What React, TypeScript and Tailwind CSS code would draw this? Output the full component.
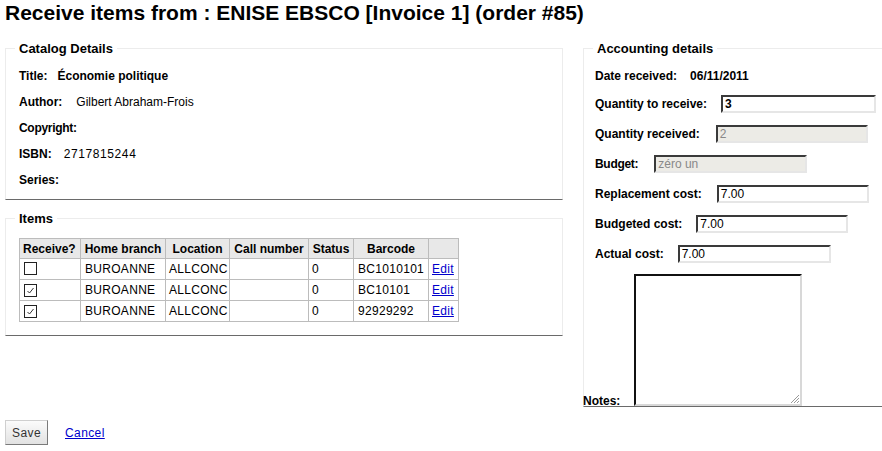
const items = [
  { checked: false, branch: "BUROANNE", location: "ALLCONC", status: "0", barcode: "BC1010101" },
  { checked: true, branch: "BUROANNE", location: "ALLCONC", status: "0", barcode: "BC10101" },
  { checked: true, branch: "BUROANNE", location: "ALLCONC", status: "0", barcode: "92929292" },
];

function Box(props: { checked: boolean }) {
  return (
    <span className="inline-flex h-[13px] w-[13px] items-center justify-center border border-[#222] bg-white">
      {props.checked && (
        <svg width="9" height="9" viewBox="0 0 9 9">
          <path d="M1.5 5 L3.5 7 L7.5 2" fill="none" stroke="#333" strokeWidth="1" />
        </svg>
      )}
    </span>
  );
}

function Field(props: { value: string; width: string; disabled?: boolean; bold?: boolean }) {
  return (
    <div
      className={
        "flex h-[18px] items-center border-2 border-t-[#3a3a3a] border-l-[#3a3a3a] border-r-[#e6e6e6] border-b-[#e6e6e6] pl-[2px] text-[12px] leading-none " +
        props.width +
        (props.disabled ? " bg-[#ecebe6] text-[#888]" : " bg-white text-black")
      }
    >
      <span className={props.bold ? "font-bold" : ""}>{props.value}</span>
    </div>
  );
}

export default function App() {
  return (
    <div className="h-[451px] w-[882px] overflow-hidden bg-white text-[12px] text-black [font-family:'Liberation_Sans',Arial,sans-serif]">
      <h1 className="ml-[5px] pt-[1px] text-[21px] leading-[24px] font-bold">
        Receive items from : ENISE EBSCO [Invoice 1] (order #85)
      </h1>

      <div className="mt-[16px] flex">
        <div className="ml-[5px] w-[558px] shrink-0">
          {/* Catalog details */}
          <fieldset className="border border-[#ececec] border-b-[#6a6a6a] px-[13px] pt-[7px] pb-[6px]">
            <legend className="-ml-[4px] px-[4px] text-[13px] leading-[15px] font-bold">Catalog Details</legend>
            <div className="flex h-[26px] items-center font-bold">
              <span>Title:</span>
              <span className="ml-[10px]">Économie politique</span>
            </div>
            <div className="flex h-[26px] items-center">
              <span className="font-bold">Author:</span>
              <span className="ml-[14px]">Gilbert Abraham-Frois</span>
            </div>
            <div className="flex h-[26px] items-center font-bold tracking-[-0.3px]">Copyright:</div>
            <div className="flex h-[26px] items-center">
              <span className="font-bold">ISBN:</span>
              <span className="ml-[12px] tracking-[0.6px]">2717815244</span>
            </div>
            <div className="flex h-[26px] items-center font-bold">Series:</div>
          </fieldset>

          {/* Items */}
          <fieldset className="mt-[11px] border border-[#ececec] border-b-[#6a6a6a] px-[13px] pt-[12px] pb-[13px]">
            <legend className="-ml-[4px] px-[4px] text-[13px] leading-[15px] font-bold">Items</legend>
            <table className="w-[439px] table-fixed border-collapse text-[12px] whitespace-nowrap">
              <thead>
                <tr className="h-[20px] bg-[#e8e8e8] font-bold">
                  <th className="w-[61px] border border-[#bcbcbc] px-[3px] text-left">Receive?</th>
                  <th className="w-[85px] border border-[#bcbcbc] px-[3px]">Home branch</th>
                  <th className="w-[64px] border border-[#bcbcbc] px-[3px]">Location</th>
                  <th className="w-[79px] border border-[#bcbcbc] px-[3px]">Call number</th>
                  <th className="w-[45px] border border-[#bcbcbc] px-[2px]">Status</th>
                  <th className="w-[75px] border border-[#bcbcbc] px-[3px]">Barcode</th>
                  <th className="w-[30px] border border-[#bcbcbc]"></th>
                </tr>
              </thead>
              <tbody>
                {items.map((it, i) => (
                  <tr key={i} className="h-[21px] tracking-[0.3px]">
                    <td className="border border-[#bcbcbc] px-[4px] align-middle leading-none">
                      <Box checked={it.checked} />
                    </td>
                    <td className="border border-[#bcbcbc] px-[4px]">{it.branch}</td>
                    <td className="border border-[#bcbcbc] px-[3px]">{it.location}</td>
                    <td className="border border-[#bcbcbc] px-[4px]"></td>
                    <td className="border border-[#bcbcbc] px-[3px]">{it.status}</td>
                    <td className="border border-[#bcbcbc] px-[4px]">{it.barcode}</td>
                    <td className="border border-[#bcbcbc] px-[3px]">
                      <a href="#" className="text-[#0000cc] underline">Edit</a>
                    </td>
                  </tr>
                ))}
              </tbody>
            </table>
          </fieldset>
        </div>

        {/* Accounting details */}
        <fieldset className="ml-[20px] w-[320px] shrink-0 border border-[#ececec] border-b-[#6a6a6a] pl-[11px] pt-[6px]">
          <legend className="-ml-[2px] px-[4px] text-[13px] leading-[15px] font-bold">Accounting details</legend>
          <div className="flex h-[27px] items-center font-bold">
            <span>Date received:</span>
            <span className="ml-[13px]">06/11/2011</span>
          </div>
          <div className="flex h-[30px] items-center">
            <span className="mr-[14px] font-bold">Quantity to receive:</span>
            <Field value="3" width="w-[155px]" bold />
          </div>
          <div className="flex h-[30px] items-center">
            <span className="mr-[16px] font-bold">Quantity received:</span>
            <Field value="2" width="w-[152px]" disabled />
          </div>
          <div className="flex h-[30px] items-center">
            <span className="mr-[16px] font-bold tracking-[-0.3px]">Budget:</span>
            <Field value="zéro un" width="w-[153px]" disabled />
          </div>
          <div className="flex h-[30px] items-center">
            <span className="mr-[15px] font-bold">Replacement cost:</span>
            <Field value="7.00" width="w-[152px]" />
          </div>
          <div className="flex h-[30px] items-center">
            <span className="mr-[14px] font-bold">Budgeted cost:</span>
            <Field value="7.00" width="w-[152px]" />
          </div>
          <div className="flex h-[29px] items-center">
            <span className="mr-[14px] font-bold">Actual cost:</span>
            <Field value="7.00" width="w-[153px]" />
          </div>
          <div className="mt-[6px] -ml-[12px] flex items-end">
            <span className="mb-[-2px] w-[51px] font-bold leading-[14px]">Notes:</span>
            <div className="relative h-[132px] w-[168px] border-2 border-t-[#111] border-l-[#111] border-r-[#d8d8d8] border-b-[#d8d8d8] bg-white">
              <svg className="absolute right-0 bottom-0" width="12" height="12" viewBox="0 0 12 12">
                <path d="M11 3 L3 11 M11 6 L6 11 M11 9 L9 11" stroke="#999" strokeWidth="1" />
              </svg>
            </div>
          </div>
        </fieldset>
      </div>

      <div className="mt-[13px] ml-[5px] flex items-center">
        <button className="h-[25px] w-[43px] border border-t-[#cfcfcf] border-l-[#cfcfcf] border-r-[#7a7a7a] border-b-[#7a7a7a] bg-gradient-to-b from-[#fbfbfb] to-[#e2e2e2] text-[12px] tracking-[0.4px] text-[#333]">
          Save
        </button>
        <a href="#" className="ml-[17px] text-[12px] tracking-[0.4px] text-[#0000cc] underline">
          Cancel
        </a>
      </div>
    </div>
  );
}
